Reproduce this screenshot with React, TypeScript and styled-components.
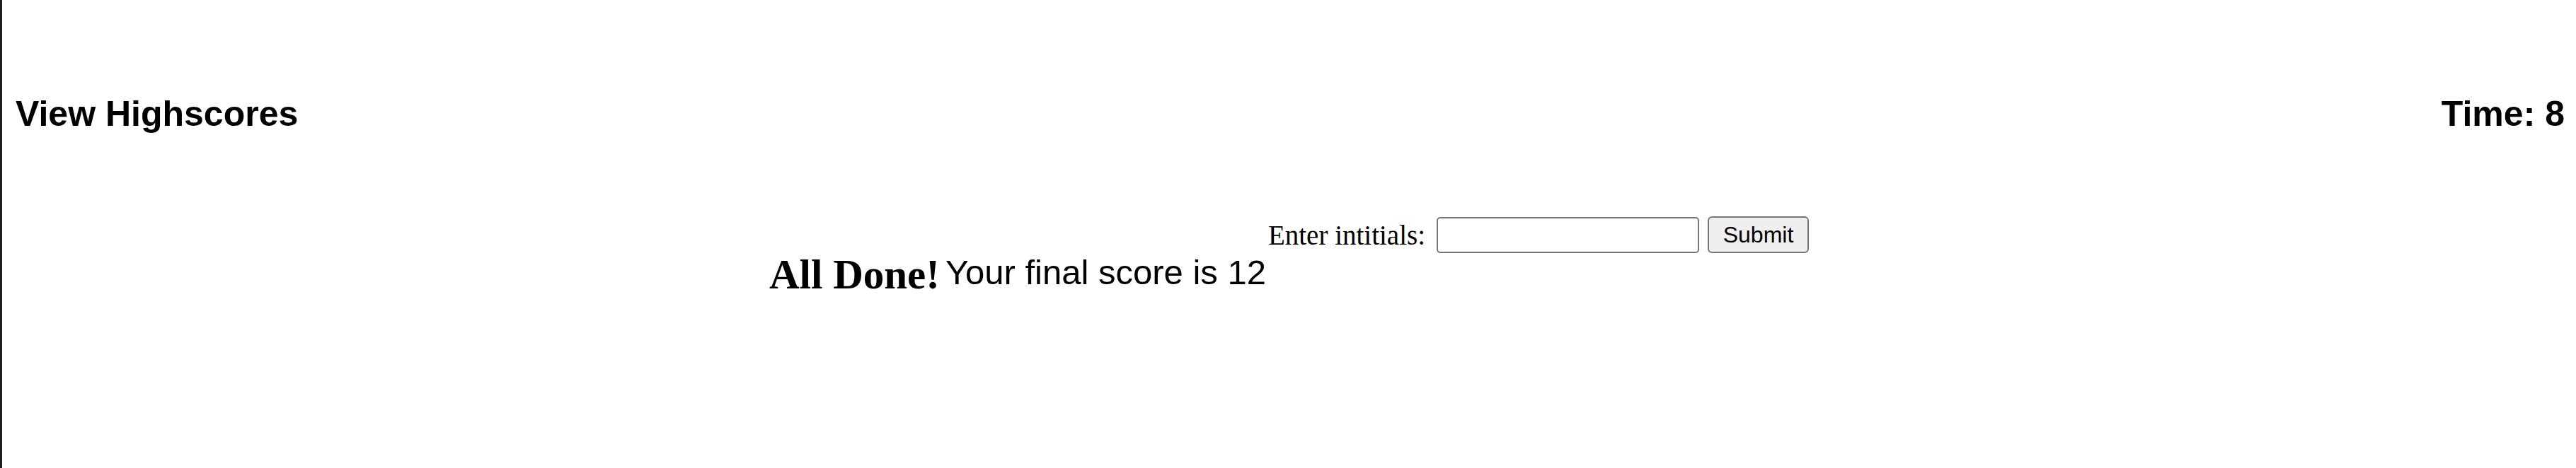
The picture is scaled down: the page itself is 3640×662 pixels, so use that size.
import React from "react";
import styled, { createGlobalStyle } from "styled-components";

const GlobalStyle = createGlobalStyle`
  html, body {
    margin: 0;
    padding: 0;
    background: #ffffff;
  }
  body {
    font-family: "Liberation Serif", "Times New Roman", serif;
    color: #000000;
  }
`;

const Page = styled.div`
  box-sizing: border-box;
  min-height: 662px;
  border-left: 3px solid #1e1e1e;
  display: flex;
  flex-direction: column;
`;

const Header = styled.header`
  display: flex;
  justify-content: space-between;
  align-items: baseline;
  padding: 132px 16px 0 19px;
`;

const HeaderTitle = styled.h2`
  margin: 0;
  font-family: "Liberation Sans", Arial, sans-serif;
  font-weight: 700;
  font-size: 50px;
  line-height: normal;
`;

const Main = styled.main`
  display: flex;
  justify-content: center;
  align-items: flex-start;
  margin-top: 116px;
`;

const DoneTitle = styled.h1`
  margin: 49px 0 0 0;
  font-family: "Liberation Serif", "Times New Roman", serif;
  font-weight: 700;
  font-size: 59px;
  line-height: 1.15;
`;

const Score = styled.p`
  margin: 51px 3px 0 8px;
  font-family: "Liberation Sans", Arial, sans-serif;
  font-size: 49px;
  line-height: normal;
`;

const Form = styled.form`
  display: flex;
  align-items: center;
  gap: 12px;
  height: 52px;
`;

const Label = styled.label`
  font-family: "Liberation Serif", "Times New Roman", serif;
  font-size: 39px;
  line-height: normal;
  margin-right: 4px;
`;

const Input = styled.input`
  box-sizing: border-box;
  width: 371px;
  height: 51px;
  margin: 0;
  padding: 2px 6px;
  border: 2px solid #767676;
  border-radius: 5px;
  background: #ffffff;
  font-family: "Liberation Sans", Arial, sans-serif;
  font-size: 30px;
  outline: none;
`;

const SubmitButton = styled.button`
  box-sizing: border-box;
  width: 143px;
  height: 52px;
  margin: 0;
  padding: 0;
  border: 2px solid #767676;
  border-radius: 6px;
  background: #efefef;
  color: #000000;
  font-family: "Liberation Sans", Arial, sans-serif;
  font-size: 32px;
  line-height: normal;
  cursor: pointer;
`;

export default function App() {
  return (
    <>
      <GlobalStyle />
      <Page>
        <Header>
          <HeaderTitle>View Highscores</HeaderTitle>
          <HeaderTitle>Time: 8</HeaderTitle>
        </Header>
        <Main>
          <DoneTitle>All Done!</DoneTitle>
          <Score>Your final score is 12</Score>
          <Form onSubmit={(e) => e.preventDefault()}>
            <Label htmlFor="initials">Enter intitials:</Label>
            <Input id="initials" type="text" />
            <SubmitButton type="submit">Submit</SubmitButton>
          </Form>
        </Main>
      </Page>
    </>
  );
}
